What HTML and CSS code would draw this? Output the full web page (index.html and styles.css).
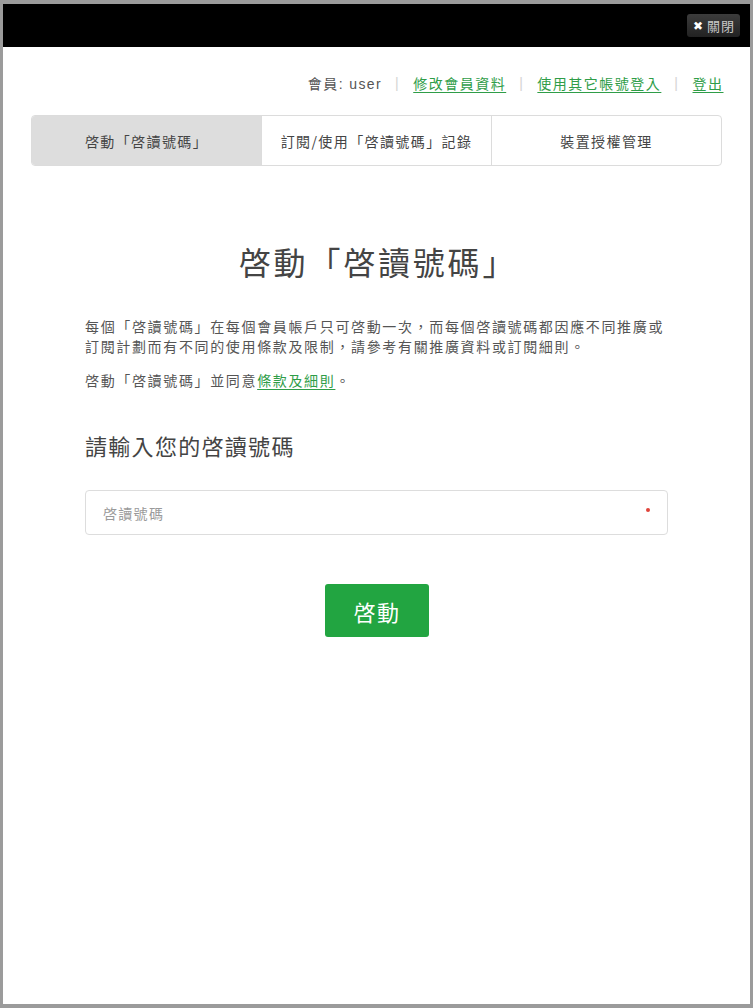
FILE: index.html
```html
<!DOCTYPE html>
<html lang="zh-Hant">
<head>
  <meta charset="UTF-8">
  <meta name="viewport" content="width=device-width, initial-scale=1.0">
  <title>啓動「啓讀號碼」</title>
  <link rel="stylesheet" href="styles.css">
</head>
<body>

<div class="window">
  <div class="topbar">
    <span class="close-btn"><span class="close-x">✖</span>關閉</span>
  </div>

  <div class="page">
    <div class="member-row">
      <span class="member">會員: user</span>
      <span class="sep">|</span>
      <a class="link" href="#">修改會員資料</a>
      <span class="sep">|</span>
      <a class="link" href="#">使用其它帳號登入</a>
      <span class="sep">|</span>
      <a class="link" href="#">登出</a>
    </div>

    <div class="tabs">
      <div class="tab active">啓動「啓讀號碼」</div>
      <div class="tab">訂閱/使用「啓讀號碼」記錄</div>
      <div class="tab">裝置授權管理</div>
    </div>

    <div class="content">
      <h1 class="title">啓動「啓讀號碼」</h1>
      <p class="desc">每個「啓讀號碼」在每個會員帳戶只可啓動一次，而每個啓讀號碼都因應不同推廣或<br>訂閱計劃而有不同的使用條款及限制，請參考有關推廣資料或訂閱細則。</p>
      <p class="desc agree">啓動「啓讀號碼」並同意<a class="link" href="#">條款及細則</a>。</p>

      <h2 class="subtitle">請輸入您的啓讀號碼</h2>
      <div class="field">
        <input class="code-input" type="text" placeholder="啓讀號碼">
        <span class="required"></span>
      </div>

      <div class="actions">
        <button class="btn-activate">啓動</button>
      </div>
    </div>
  </div>
</div>

</body>
</html>
```

FILE: styles.css
```css
body {
  margin: 0;
  background-color: #9b9b9b;
  font-family: "Liberation Sans", "Noto Sans CJK TC", sans-serif;
}
.window {
  box-sizing: border-box;
  height: 1008px;
  border: 3px solid #9b9b9b;
  border-top-width: 4px;
  border-bottom-width: 4px;
  background-color: #ffffff;
}
.topbar {
  height: 43px;
  background-color: #000000;
  display: flex;
  justify-content: flex-end;
  align-items: center;
  padding-right: 10px;
}
.close-btn {
  display: flex;
  align-items: center;
  height: 23px;
  padding: 0 5px 0 6px;
  border-radius: 3px;
  background: linear-gradient(#3c3c3c, #222222);
  color: #c8c8c8;
  font-size: 13px;
  letter-spacing: 1px;
  font-family: "Noto Sans CJK TC", sans-serif;
}
.close-x {
  color: #ffffff;
  font-size: 12px;
  margin-right: 3px;
  font-family: "DejaVu Sans", sans-serif;
}
.page {
  padding: 0 28px;
}
.member-row {
  display: flex;
  justify-content: flex-end;
  align-items: center;
  margin-top: 26px;
  height: 20px;
  font-size: 14px;
  letter-spacing: 1.5px;
  color: #555555;
  font-family: "Noto Sans CJK TC", sans-serif;
}
.member {
  font-family: "Liberation Sans", "Noto Sans CJK TC", sans-serif;
  letter-spacing: 1.4px;
}
.sep {
  color: #d4d4d4;
  margin: 0 13px;
  font-family: "Liberation Sans", sans-serif;
}
.member-row .link:last-child {
  margin-right: -1.5px;
}
.link {
  color: #2f9d48;
  text-decoration: underline;
  text-underline-offset: 3px;
}
.tabs {
  display: flex;
  margin-top: 22px;
  height: 51px;
  border: 1px solid #dcdcdc;
  border-radius: 4px;
  overflow: hidden;
  box-sizing: border-box;
}
.tab {
  flex: 1;
  display: flex;
  justify-content: center;
  align-items: center;
  font-size: 14px;
  letter-spacing: 1.4px;
  color: #444444;
  font-family: "Noto Sans CJK TC", sans-serif;
  border-left: 1px solid #dcdcdc;
}
.tab:first-child {
  border-left: none;
}
.tab.active {
  background-color: #dddddd;
}
.content {
  padding: 0 54px;
  font-family: "Noto Sans CJK TC", sans-serif;
}
.title {
  margin: 75px 0 0;
  padding-left: 3px;
  text-align: center;
  font-size: 32px;
  line-height: 40px;
  letter-spacing: 2.8px;
  font-weight: normal;
  color: #444444;
}
.desc {
  margin: 35px 0 0;
  font-size: 14px;
  line-height: 20px;
  letter-spacing: 1.65px;
  color: #555555;
}
.desc.agree {
  margin-top: 14px;
}
.subtitle {
  margin: 40px 0 0;
  font-size: 22px;
  line-height: 30px;
  letter-spacing: 1.3px;
  font-weight: normal;
  color: #444444;
}
.field {
  position: relative;
  margin-top: 30px;
}
.code-input {
  display: block;
  box-sizing: border-box;
  width: 100%;
  height: 45px;
  padding: 0 17px;
  border: 1px solid #dddddd;
  border-radius: 4px;
  font-size: 14px;
  letter-spacing: 1.3px;
  font-family: "Noto Sans CJK TC", sans-serif;
  color: #333333;
  outline: none;
}
.code-input::placeholder {
  color: #9a9a9a;
}
.required {
  position: absolute;
  right: 18px;
  top: 18px;
  width: 4px;
  height: 4px;
  border-radius: 50%;
  background-color: #e0443a;
}
.actions {
  display: flex;
  justify-content: center;
  margin-top: 49px;
}
.btn-activate {
  width: 104px;
  height: 53px;
  padding: 0 0 0 1px;
  border: none;
  border-radius: 3px;
  background-color: #22a541;
  color: #ffffff;
  font-size: 22px;
  letter-spacing: 1.5px;
  font-family: "Noto Sans CJK TC", sans-serif;
  cursor: pointer;
}
```
